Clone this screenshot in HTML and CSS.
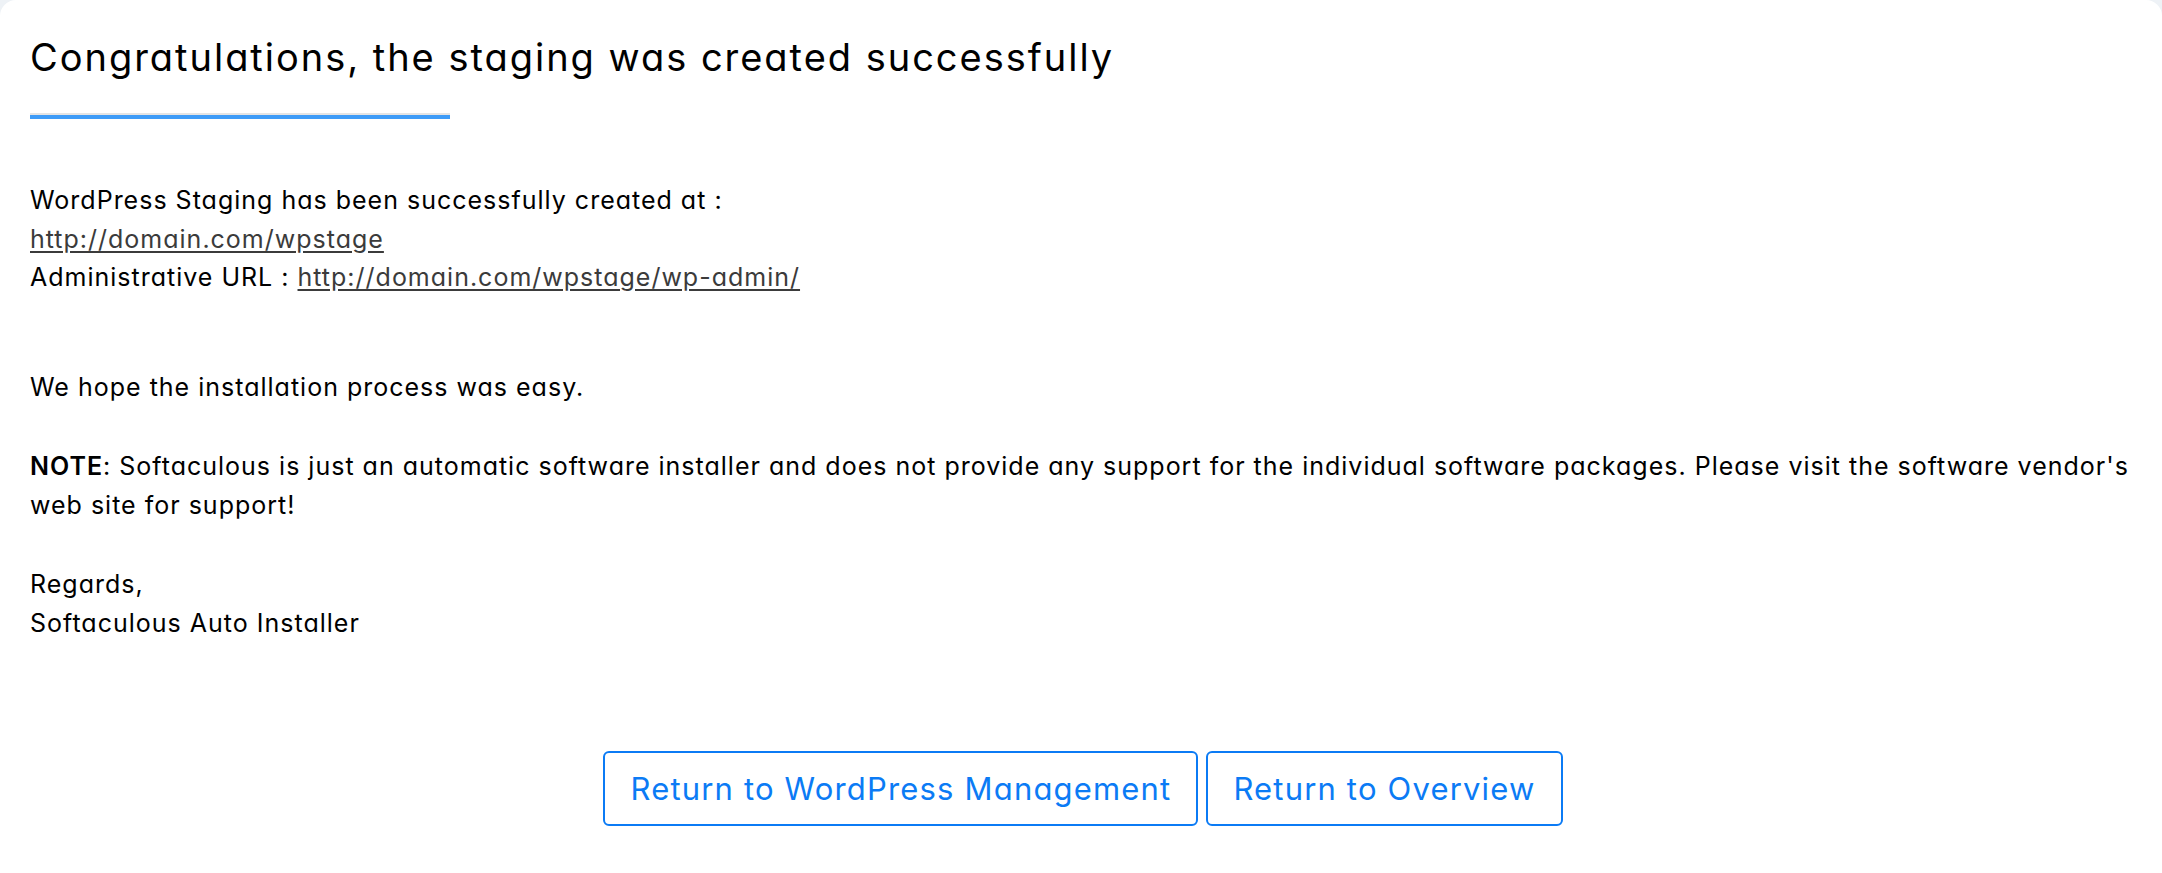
FILE: index.html
```html
<!DOCTYPE html>
<html lang="en">
<head>
  <meta charset="UTF-8" />
  <meta name="viewport" content="width=device-width, initial-scale=1" />
  <title>Staging created</title>
  <link rel="stylesheet" href="styles.css">
</head>
<body>

  <div class="card">
    <h1 class="title">Congratulations, the staging was created successfully</h1>
    <div class="title-bar"></div>

    <p class="details">
      WordPress Staging has been successfully created at :<br />
      <a href="#">http://domain.com/wpstage</a><br />
      Administrative URL : <a href="#">http://domain.com/wpstage/wp-admin/</a>
    </p>

    <p class="message">
      We hope the installation process was easy.<br /><br />
      <b>NOTE</b>: Softaculous is just an automatic software installer and does not provide any support for the individual software packages. Please visit the software vendor's web site for support!<br /><br />
      Regards,<br />
      Softaculous Auto Installer
    </p>

    <div class="actions">
      <a href="#" class="btn">Return to WordPress Management</a>
      <a href="#" class="btn">Return to Overview</a>
    </div>
  </div>

</body>
</html>
```

FILE: styles.css
```css
body {
  margin: 0;
  background: #eef2f6;
  font-family: Inter, "Open Sans", sans-serif;
  font-feature-settings: "cv11";
  color: #000;
}

.card {
  background: #fff;
  border-radius: 16px 16px 0 0;
  min-height: 100vh;
  padding: 0 20px 0 30px;
  box-sizing: border-box;
  overflow: hidden;
}

.title {
  font-size: 38px;
  font-weight: 400;
  letter-spacing: 0.052em;
  margin: 0;
  padding-top: 33px;
  line-height: 48px;
}

.title-bar {
  width: 420px;
  height: 4px;
  margin-top: 32px;
  background: #3d9bf7;
  border-top: 2px solid #e4e4e4;
}

.details,
.message {
  font-size: 25px;
  line-height: 38.6px;
  letter-spacing: 0.04em;
  margin: 0;
}

.details {
  margin-top: 62px;
  margin-bottom: 71px;
}

.details a {
  color: #3b3b3b;
  text-decoration: underline;
  text-underline-offset: 3px;
}

.message {
  line-height: 39.4px;
}

.message b {
  font-weight: 600;
}

.actions {
  display: flex;
  justify-content: center;
  gap: 8px;
  margin-top: 107px;
  padding-right: 6px;
}

.btn {
  display: inline-block;
  font-size: 31px;
  letter-spacing: 0.038em;
  color: #0b7bf5;
  text-decoration: none;
  border: 2px solid #0b7bf5;
  border-radius: 6px;
  padding: 0 25px;
  line-height: 71px;
}
```
